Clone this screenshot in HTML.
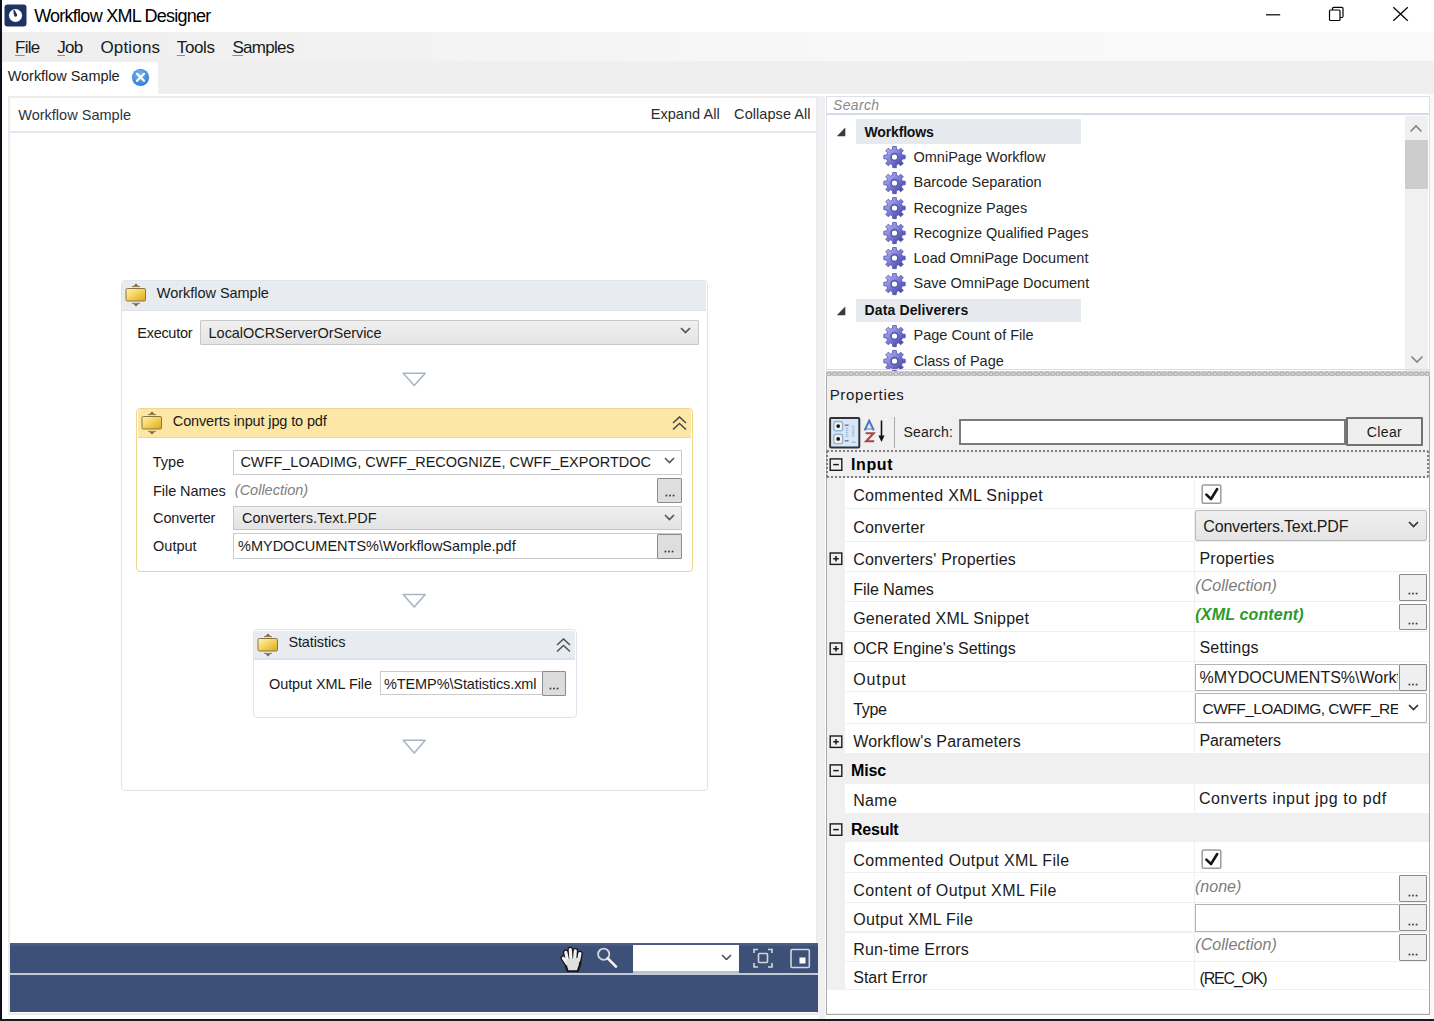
<!DOCTYPE html>
<html><head><meta charset="utf-8"><title>Workflow XML Designer</title>
<style>
html,body{margin:0;padding:0;width:1434px;height:1021px;overflow:hidden;background:#fff}
body{position:relative;font-family:"Liberation Sans", sans-serif}
body div, body svg{position:absolute}
.t{white-space:pre;font-family:"Liberation Sans", sans-serif}
u{text-decoration-color:#8c8c8c;text-underline-offset:1.5px}
</style></head><body>
<div style="left:0px;top:0px;width:1434px;height:32px;background:#fff"></div>
<div style="left:0px;top:0px;width:1.6px;height:1021px;background:#0b0f17;z-index:5"></div>
<div style="left:0px;top:1018.5px;width:1434px;height:2.5px;background:#1a1a1a;z-index:5"></div>
<svg style="position:absolute;left:4px;top:4px" width="23" height="23" viewBox="0 0 23 23"><rect x="0.5" y="0.5" width="22" height="22" rx="3" fill="#1d3461"/><ellipse cx="11.5" cy="11.5" rx="6.6" ry="6.4" fill="#fff"/><path d="M9.2 6.3 L10.6 6 L13.1 10.6 Q13.4 12.6 11.8 12.8 Q10.3 12.8 10 11.2 Z" fill="#1d3461"/></svg>
<div class="t" style="left:34.2px;top:7.06px;font-size:18px;line-height:18px;color:#000;font-weight:normal;font-style:normal;letter-spacing:-0.748px;">Workflow XML Designer</div>
<svg style="position:absolute;left:1250px;top:0" width="184" height="32" viewBox="0 0 184 32"><path d="M16 14.8 H30.2" stroke="#000" stroke-width="1.2"/><rect x="79.5" y="10" width="10.5" height="10.5" rx="1" fill="none" stroke="#000" stroke-width="1.2"/><path d="M82.5 10 V8.5 Q82.5 7.3 83.7 7.3 H91.8 Q93 7.3 93 8.5 V16.3 Q93 17.5 91.8 17.5 H90" fill="none" stroke="#000" stroke-width="1.2"/><path d="M143.3 7.2 L157.8 20.7 M157.8 7.2 L143.3 20.7" stroke="#000" stroke-width="1.2"/></svg>
<div style="left:2px;top:32px;width:1432px;height:29px;background:linear-gradient(90deg,#eeeeee,#f2f2f2 25%,#f8f8f8 60%,#fafafa)"></div>
<div class="t" style="left:15.1px;top:38.91px;font-size:17px;line-height:17px;color:#1a1a1a;font-weight:normal;font-style:normal;letter-spacing:-0.802px;text-decoration-color:#8a8a8a;text-underline-offset:2px"><u>F</u>ile</div>
<div class="t" style="left:57.3px;top:38.91px;font-size:17px;line-height:17px;color:#1a1a1a;font-weight:normal;font-style:normal;letter-spacing:-0.711px;text-decoration-color:#8a8a8a;text-underline-offset:2px"><u>J</u>ob</div>
<div class="t" style="left:100.5px;top:38.91px;font-size:17px;line-height:17px;color:#1a1a1a;font-weight:normal;font-style:normal;letter-spacing:0.151px;text-decoration-color:#8a8a8a;text-underline-offset:2px">Options</div>
<div class="t" style="left:176.8px;top:38.91px;font-size:17px;line-height:17px;color:#1a1a1a;font-weight:normal;font-style:normal;letter-spacing:-0.372px;text-decoration-color:#8a8a8a;text-underline-offset:2px"><u>T</u>ools</div>
<div class="t" style="left:232.4px;top:38.91px;font-size:17px;line-height:17px;color:#1a1a1a;font-weight:normal;font-style:normal;letter-spacing:-0.693px;text-decoration-color:#8a8a8a;text-underline-offset:2px"><u>S</u>amples</div>
<div style="left:2px;top:61px;width:1432px;height:32.5px;background:#efefef"></div>
<div style="left:2px;top:61.5px;width:155.5px;height:32px;background:#fff"></div>
<div class="t" style="left:7.7px;top:68.63px;font-size:14.5px;line-height:14.5px;color:#1e1e1e;font-weight:normal;font-style:normal;letter-spacing:-0.039px;">Workflow Sample</div>
<svg style="position:absolute;left:131px;top:68px" width="19" height="19" viewBox="0 0 19 19"><defs><radialGradient id="cg" cx="45%" cy="35%" r="65%"><stop offset="0" stop-color="#7fb6f0"/><stop offset="1" stop-color="#2f7fd6"/></radialGradient></defs><circle cx="9.5" cy="9.3" r="8.6" fill="url(#cg)"/><path d="M6 5.8 L13 12.8 M13 5.8 L6 12.8" stroke="#fff" stroke-width="2.2" stroke-linecap="round"/></svg>
<div style="left:2px;top:93.5px;width:1432px;height:925px;background:#fff"></div>
<div style="left:7.5px;top:96px;width:810.5px;height:919px;border:2px solid #ececec;box-sizing:border-box;background:#fff"></div>
<div style="left:9.5px;top:130.5px;width:808px;height:2px;background:#e3e8ef"></div>
<div class="t" style="left:18.2px;top:108.13px;font-size:14.5px;line-height:14.5px;color:#2b3440;font-weight:normal;font-style:normal;letter-spacing:0.018px;">Workflow Sample</div>
<div class="t" style="left:650.7px;top:106.53px;font-size:14.5px;line-height:14.5px;color:#2b2b2b;font-weight:normal;font-style:normal;letter-spacing:0.052px;">Expand All</div>
<div class="t" style="left:734.1px;top:106.53px;font-size:14.5px;line-height:14.5px;color:#2b2b2b;font-weight:normal;font-style:normal;letter-spacing:0.067px;">Collapse All</div>
<div style="left:817.5px;top:96px;width:7.5px;height:922.5px;background:#f0f0f0"></div>
<div style="left:1429.5px;top:93.5px;width:4.5px;height:925px;background:#f9f9f9"></div>
<div style="left:120.5px;top:279.5px;width:587px;height:511px;border:1.5px solid #dfe4ec;border-radius:4px;box-sizing:border-box;background:#fff"></div>
<div style="left:122px;top:281px;width:584px;height:29px;background:#e8ebef;border-radius:3px 3px 0 0"></div>
<div style="left:122px;top:309.5px;width:584px;height:1.5px;background:#dde3ea"></div>
<svg style="position:absolute;left:125px;top:283px" width="22" height="24" viewBox="0 0 22 24"><defs><linearGradient id="yg" x1="0" y1="0" x2="1" y2="1"><stop offset="0" stop-color="#fff4c0"/><stop offset=".45" stop-color="#f6d560"/><stop offset="1" stop-color="#d9a820"/></linearGradient></defs><path d="M11 0.5 L13.5 3 H8.5 Z" fill="#7a6a40"/><path d="M7 3.6 H15" stroke="#8a7a50" stroke-width="1"/><rect x="1" y="5.5" width="19.5" height="12.5" rx="1.3" fill="url(#yg)" stroke="#8a7440" stroke-width="1"/><path d="M7 20.4 H15" stroke="#8a7a50" stroke-width="1"/><path d="M11 23.5 L13.5 21 H8.5 Z" fill="#7a6a40"/></svg>
<div class="t" style="left:156.8px;top:285.63px;font-size:14.5px;line-height:14.5px;color:#1a1a1a;font-weight:normal;font-style:normal;letter-spacing:-0.032px;">Workflow Sample</div>
<div class="t" style="left:137.3px;top:325.93px;font-size:14.5px;line-height:14.5px;color:#1a1a1a;font-weight:normal;font-style:normal;letter-spacing:-0.291px;">Executor</div>
<div style="left:200px;top:319.5px;width:498.5px;height:25px;background:linear-gradient(#f0f0f0,#e5e5e5);border:1.5px solid #c8c8c8;box-sizing:border-box;border-radius:1px"></div>
<div class="t" style="left:208.6px;top:325.93px;font-size:14.5px;line-height:14.5px;color:#1a1a1a;font-weight:normal;font-style:normal;letter-spacing:-0.048px;">LocalOCRServerOrService</div>
<svg style="position:absolute;left:679.5px;top:327.45px" width="11" height="6.5" viewBox="0 0 11 6.5"><path d="M1 1 L5.5 5.5 L10 1" fill="none" stroke="#555" stroke-width="1.7"/></svg>
<svg style="position:absolute;left:0;top:0" width="1434" height="1021" viewBox="0 0 1434 1021"><path d="M403.2 373.2 H425.2 L414.2 385.5 Z" fill="none" stroke="#aab5c4" stroke-width="1.6" stroke-linejoin="round"/></svg>
<div style="left:136.2px;top:407.8px;width:556.5px;height:164.5px;border:1.5px solid #f0d58e;border-radius:4px;box-sizing:border-box;background:#fff"></div>
<div style="left:137.7px;top:409.3px;width:553.5px;height:28.4px;background:#fde7a6;border-radius:3px 3px 0 0"></div>
<div style="left:137.7px;top:436.7px;width:553.5px;height:1.8px;background:#f2d68f"></div>
<svg style="position:absolute;left:141px;top:411px" width="22" height="24" viewBox="0 0 22 24"><defs><linearGradient id="yg" x1="0" y1="0" x2="1" y2="1"><stop offset="0" stop-color="#fff4c0"/><stop offset=".45" stop-color="#f6d560"/><stop offset="1" stop-color="#d9a820"/></linearGradient></defs><path d="M11 0.5 L13.5 3 H8.5 Z" fill="#7a6a40"/><path d="M7 3.6 H15" stroke="#8a7a50" stroke-width="1"/><rect x="1" y="5.5" width="19.5" height="12.5" rx="1.3" fill="url(#yg)" stroke="#8a7440" stroke-width="1"/><path d="M7 20.4 H15" stroke="#8a7a50" stroke-width="1"/><path d="M11 23.5 L13.5 21 H8.5 Z" fill="#7a6a40"/></svg>
<div class="t" style="left:172.8px;top:413.63px;font-size:14.5px;line-height:14.5px;color:#1a1a1a;font-weight:normal;font-style:normal;letter-spacing:-0.133px;">Converts input jpg to pdf</div>
<svg style="position:absolute;left:671.5px;top:416.2px" width="15" height="15" viewBox="0 0 15 15"><path d="M1 7 L7.5 1 L14 7 M1 13.5 L7.5 7.5 L14 13.5" fill="none" stroke="#4a4a4a" stroke-width="1.6"/></svg>
<div class="t" style="left:152.8px;top:455.13px;font-size:14.5px;line-height:14.5px;color:#1a1a1a;font-weight:normal;font-style:normal;letter-spacing:0px;">Type</div>
<div style="left:233px;top:449.5px;width:449px;height:25.2px;background:#fff;border:1.5px solid #c9cbcf;box-sizing:border-box"></div>
<div class="t" style="left:240.4px;top:454.83px;font-size:14.5px;line-height:14.5px;color:#1a1a1a;font-weight:normal;font-style:normal;letter-spacing:0px;">CWFF_LOADIMG, CWFF_RECOGNIZE, CWFF_EXPORTDOC</div>
<svg style="position:absolute;left:663.5px;top:457.45px" width="11" height="6.5" viewBox="0 0 11 6.5"><path d="M1 1 L5.5 5.5 L10 1" fill="none" stroke="#555" stroke-width="1.6"/></svg>
<div class="t" style="left:153.1px;top:483.83px;font-size:14.5px;line-height:14.5px;color:#1a1a1a;font-weight:normal;font-style:normal;letter-spacing:-0.081px;">File Names</div>
<div class="t" style="left:234.8px;top:483.23px;font-size:14.5px;line-height:14.5px;color:#808080;font-weight:normal;font-style:italic;letter-spacing:0px;">(Collection)</div>
<div style="left:657px;top:477.5px;width:25px;height:25px;background:#dedede;border:1.5px solid #8c8c8c;box-sizing:border-box;border-radius:1px"></div>
<svg style="position:absolute;left:663.5px;top:494.0px" width="12" height="3" viewBox="0 0 12 3"><rect x="1.6" y="0.7" width="1.7" height="1.7" fill="#3a3a3a"/><rect x="5.15" y="0.7" width="1.7" height="1.7" fill="#3a3a3a"/><rect x="8.7" y="0.7" width="1.7" height="1.7" fill="#3a3a3a"/></svg>
<div class="t" style="left:153.1px;top:511.13px;font-size:14.5px;line-height:14.5px;color:#1a1a1a;font-weight:normal;font-style:normal;letter-spacing:-0.171px;">Converter</div>
<div style="left:233px;top:505.6px;width:449px;height:24.6px;background:linear-gradient(#f0f0f0,#e3e3e3);border:1.5px solid #c8c8c8;box-sizing:border-box"></div>
<div class="t" style="left:242px;top:511.33px;font-size:14.5px;line-height:14.5px;color:#1a1a1a;font-weight:normal;font-style:normal;letter-spacing:0px;">Converters.Text.PDF</div>
<svg style="position:absolute;left:663.5px;top:514.25px" width="11" height="6.5" viewBox="0 0 11 6.5"><path d="M1 1 L5.5 5.5 L10 1" fill="none" stroke="#555" stroke-width="1.6"/></svg>
<div class="t" style="left:153.1px;top:539.33px;font-size:14.5px;line-height:14.5px;color:#1a1a1a;font-weight:normal;font-style:normal;letter-spacing:0px;">Output</div>
<div style="left:233px;top:533.2px;width:449px;height:25.6px;background:#fff;border:1.5px solid #c9cbcf;box-sizing:border-box"></div>
<div class="t" style="left:238px;top:539.43px;font-size:14.5px;line-height:14.5px;color:#1a1a1a;font-weight:normal;font-style:normal;letter-spacing:0px;">%MYDOCUMENTS%\WorkflowSample.pdf</div>
<div style="left:656.5px;top:533.5px;width:25.5px;height:25px;background:#dedede;border:1.5px solid #8c8c8c;box-sizing:border-box;border-radius:1px"></div>
<svg style="position:absolute;left:663.25px;top:550.0px" width="12" height="3" viewBox="0 0 12 3"><rect x="1.6" y="0.7" width="1.7" height="1.7" fill="#3a3a3a"/><rect x="5.15" y="0.7" width="1.7" height="1.7" fill="#3a3a3a"/><rect x="8.7" y="0.7" width="1.7" height="1.7" fill="#3a3a3a"/></svg>
<svg style="position:absolute;left:0;top:0" width="1434" height="1021" viewBox="0 0 1434 1021"><path d="M403.2 594.5 H425.2 L414.2 607 Z" fill="none" stroke="#aab5c4" stroke-width="1.6" stroke-linejoin="round"/></svg>
<div style="left:252.5px;top:629.2px;width:324px;height:88.8px;border:1.5px solid #dfe4ec;border-radius:4px;box-sizing:border-box;background:#fff"></div>
<div style="left:254px;top:630.7px;width:321px;height:28.3px;background:#e8ebef;border-radius:3px 3px 0 0"></div>
<div style="left:254px;top:658.2px;width:321px;height:1.6px;background:#dde3ea"></div>
<svg style="position:absolute;left:256.5px;top:633px" width="22" height="24" viewBox="0 0 22 24"><defs><linearGradient id="yg" x1="0" y1="0" x2="1" y2="1"><stop offset="0" stop-color="#fff4c0"/><stop offset=".45" stop-color="#f6d560"/><stop offset="1" stop-color="#d9a820"/></linearGradient></defs><path d="M11 0.5 L13.5 3 H8.5 Z" fill="#7a6a40"/><path d="M7 3.6 H15" stroke="#8a7a50" stroke-width="1"/><rect x="1" y="5.5" width="19.5" height="12.5" rx="1.3" fill="url(#yg)" stroke="#8a7440" stroke-width="1"/><path d="M7 20.4 H15" stroke="#8a7a50" stroke-width="1"/><path d="M11 23.5 L13.5 21 H8.5 Z" fill="#7a6a40"/></svg>
<div class="t" style="left:288.4px;top:635.43px;font-size:14.5px;line-height:14.5px;color:#1a1a1a;font-weight:normal;font-style:normal;letter-spacing:-0.113px;">Statistics</div>
<svg style="position:absolute;left:555.5px;top:638px" width="15" height="15" viewBox="0 0 15 15"><path d="M1 7 L7.5 1 L14 7 M1 13.5 L7.5 7.5 L14 13.5" fill="none" stroke="#4b5563" stroke-width="1.6"/></svg>
<div class="t" style="left:269px;top:676.73px;font-size:14.5px;line-height:14.5px;color:#1a1a1a;font-weight:normal;font-style:normal;letter-spacing:-0.088px;">Output XML File</div>
<div style="left:379.5px;top:671.3px;width:163px;height:24.2px;background:#fff;border:1.5px solid #c9cbcf;box-sizing:border-box"></div>
<div class="t" style="left:384px;top:676.73px;font-size:14.5px;line-height:14.5px;color:#1a1a1a;font-weight:normal;font-style:normal;letter-spacing:-0.109px;">%TEMP%\Statistics.xml</div>
<div style="left:541.7px;top:671.3px;width:24.8px;height:24.3px;background:#dcdcdc;border:1.5px solid #8c8c8c;box-sizing:border-box;border-radius:1px"></div>
<svg style="position:absolute;left:548.1px;top:687.0999999999999px" width="12" height="3" viewBox="0 0 12 3"><rect x="1.6" y="0.7" width="1.7" height="1.7" fill="#3a3a3a"/><rect x="5.15" y="0.7" width="1.7" height="1.7" fill="#3a3a3a"/><rect x="8.7" y="0.7" width="1.7" height="1.7" fill="#3a3a3a"/></svg>
<svg style="position:absolute;left:0;top:0" width="1434" height="1021" viewBox="0 0 1434 1021"><path d="M403.2 740.3 H425.2 L414.2 753 Z" fill="none" stroke="#aab5c4" stroke-width="1.6" stroke-linejoin="round"/></svg>
<div style="left:9.8px;top:942.7px;width:808px;height:69px;background:#3d5078"></div>
<div style="left:9.8px;top:942.7px;width:808px;height:4px;background:linear-gradient(#4f6289,#3d5078)"></div>
<div style="left:9.8px;top:973.2px;width:808px;height:1.9px;background:#c3cad6"></div>
<div style="left:633px;top:944.8px;width:105.5px;height:27.7px;background:#fff"></div>
<div style="left:633px;top:971px;width:105.5px;height:2px;background:#b9c3d2"></div>
<svg style="position:absolute;left:720.8px;top:953.95px" width="11" height="6.5" viewBox="0 0 11 6.5"><path d="M1 1 L5.5 5.5 L10 1" fill="none" stroke="#555" stroke-width="1.7"/></svg>
<svg style="position:absolute;left:555px;top:943px" width="35" height="30" viewBox="0 0 35 30"><g stroke="#151515" stroke-linecap="round" fill="none"><path d="M8.3 15.2 L12 20.5 M10.8 9.3 L12.6 17.5 M15.3 6.6 L15.9 15.5 M20.3 7.8 L19.7 15.5 M24.9 10.6 L23.6 17.5" stroke-width="5.6"/></g><path d="M10.5 16 L25.8 13.5 L24.8 22 L22.8 27.8 L12.6 27.8 L10.8 22.5 Z" fill="#151515" stroke="#151515" stroke-width="2.4" stroke-linejoin="round"/><g stroke="#f2f2f2" stroke-linecap="round" fill="none"><path d="M8.3 15.2 L12 20.5 M10.8 9.3 L12.6 17.5 M15.3 6.6 L15.9 15.5 M20.3 7.8 L19.7 15.5 M24.9 10.6 L23.6 17.5" stroke-width="3.2"/></g><path d="M11.5 16.5 L24.6 14.5 L23.8 22 L21.9 27.2 L13.4 27.2 L11.8 22.3 Z" fill="#dedede"/></svg>
<svg style="position:absolute;left:595px;top:945px" width="25" height="25" viewBox="0 0 25 25"><circle cx="8.7" cy="9.2" r="5.6" fill="none" stroke="#d8d8d8" stroke-width="1.8"/><path d="M12.8 13.3 L21 21.6" stroke="#f4f4f4" stroke-width="2.6" stroke-linecap="round"/></svg>
<svg style="position:absolute;left:752px;top:947px" width="23" height="23" viewBox="0 0 23 23"><path d="M2 6 V2.5 H6 M16 2.5 H20 V6 M20 16 V20 H16 M6 20 H2 V16" fill="none" stroke="#d6d6d6" stroke-width="1.6"/><rect x="6.5" y="6.5" width="9" height="9" rx="1" fill="none" stroke="#d6d6d6" stroke-width="1.6"/></svg>
<svg style="position:absolute;left:789px;top:947px" width="23" height="23" viewBox="0 0 23 23"><rect x="2" y="2.5" width="18.3" height="18" rx="1" fill="none" stroke="#d6d6d6" stroke-width="1.6"/><rect x="10.5" y="10.5" width="6" height="6" fill="#fff"/></svg>
<div style="left:825.5px;top:95.5px;width:604px;height:275px;overflow:hidden;background:#fff;border:1.5px solid #d8e0ea;border-bottom:none;box-sizing:border-box">
</div>
<div style="left:827px;top:113px;width:601.5px;height:2px;background:#d3dbe6"></div>
<div class="t" style="left:833px;top:98.35px;font-size:14px;line-height:14px;color:#8a8a8a;font-weight:normal;font-style:italic;letter-spacing:0.328px;">Search</div>
<div style="left:1404.8px;top:115.5px;width:23.5px;height:255px;background:#f0f0f0"></div>
<div style="left:1404.8px;top:140.2px;width:23.5px;height:48.4px;background:#cdcdcd"></div>
<svg style="position:absolute;left:1409px;top:124px" width="14" height="9" viewBox="0 0 14 9"><path d="M1.5 7.5 L7 2 L12.5 7.5" fill="none" stroke="#858585" stroke-width="1.7"/></svg>
<svg style="position:absolute;left:1409.5px;top:354.5px" width="14" height="9" viewBox="0 0 14 9"><path d="M1.5 1.5 L7 7 L12.5 1.5" fill="none" stroke="#858585" stroke-width="1.7"/></svg>
<div style="left:855.8px;top:119.1px;width:225.3px;height:24.5px;background:#e6eaee"></div>
<svg style="position:absolute;left:836.2px;top:126.8px" width="10" height="10" viewBox="0 0 10 10"><path d="M9.3 0.6 V9.2 H0.8 Z" fill="#3a3a3a"/></svg>
<div class="t" style="left:864.5px;top:124.85px;font-size:14px;line-height:14px;color:#111;font-weight:bold;font-style:normal;letter-spacing:-0.154px;">Workflows</div>
<svg style="position:absolute;left:883.3px;top:146.39999999999998px" width="23" height="23" viewBox="0 0 23 23"><defs><linearGradient id="gg" x1="0.1" y1="0.1" x2="0.9" y2="0.9"><stop offset="0" stop-color="#b4b4f6"/><stop offset=".5" stop-color="#7a7ad6"/><stop offset="1" stop-color="#40409e"/></linearGradient></defs><path d="M8.44 3.61 L9.57 3.24 L9.73 0.35 L13.27 0.35 L13.43 3.24 L14.56 3.61 L15.63 4.15 L17.78 2.21 L20.29 4.72 L18.35 6.87 L18.89 7.94 L19.26 9.07 L22.15 9.23 L22.15 12.77 L19.26 12.93 L18.89 14.06 L18.35 15.13 L20.29 17.28 L17.78 19.79 L15.63 17.85 L14.56 18.39 L13.43 18.76 L13.27 21.65 L9.73 21.65 L9.57 18.76 L8.44 18.39 L7.37 17.85 L5.22 19.79 L2.71 17.28 L4.65 15.13 L4.11 14.06 L3.74 12.93 L0.85 12.77 L0.85 9.23 L3.74 9.07 L4.11 7.94 L4.65 6.87 L2.71 4.72 L5.22 2.21 L7.37 4.15 Z" fill="url(#gg)" stroke="#5a5ab0" stroke-width="0.9" stroke-linejoin="round"/><circle cx="11.5" cy="11" r="3.4" fill="#fff" stroke="#5c5cae" stroke-width="1.6"/></svg>
<div class="t" style="left:913.5px;top:150.13px;font-size:14.5px;line-height:14.5px;color:#262626;font-weight:normal;font-style:normal;letter-spacing:0px;">OmniPage Workflow</div>
<svg style="position:absolute;left:883.3px;top:171.64px" width="23" height="23" viewBox="0 0 23 23"><defs><linearGradient id="gg" x1="0.1" y1="0.1" x2="0.9" y2="0.9"><stop offset="0" stop-color="#b4b4f6"/><stop offset=".5" stop-color="#7a7ad6"/><stop offset="1" stop-color="#40409e"/></linearGradient></defs><path d="M8.44 3.61 L9.57 3.24 L9.73 0.35 L13.27 0.35 L13.43 3.24 L14.56 3.61 L15.63 4.15 L17.78 2.21 L20.29 4.72 L18.35 6.87 L18.89 7.94 L19.26 9.07 L22.15 9.23 L22.15 12.77 L19.26 12.93 L18.89 14.06 L18.35 15.13 L20.29 17.28 L17.78 19.79 L15.63 17.85 L14.56 18.39 L13.43 18.76 L13.27 21.65 L9.73 21.65 L9.57 18.76 L8.44 18.39 L7.37 17.85 L5.22 19.79 L2.71 17.28 L4.65 15.13 L4.11 14.06 L3.74 12.93 L0.85 12.77 L0.85 9.23 L3.74 9.07 L4.11 7.94 L4.65 6.87 L2.71 4.72 L5.22 2.21 L7.37 4.15 Z" fill="url(#gg)" stroke="#5a5ab0" stroke-width="0.9" stroke-linejoin="round"/><circle cx="11.5" cy="11" r="3.4" fill="#fff" stroke="#5c5cae" stroke-width="1.6"/></svg>
<div class="t" style="left:913.5px;top:175.37px;font-size:14.5px;line-height:14.5px;color:#262626;font-weight:normal;font-style:normal;letter-spacing:0px;">Barcode Separation</div>
<svg style="position:absolute;left:883.3px;top:196.87999999999997px" width="23" height="23" viewBox="0 0 23 23"><defs><linearGradient id="gg" x1="0.1" y1="0.1" x2="0.9" y2="0.9"><stop offset="0" stop-color="#b4b4f6"/><stop offset=".5" stop-color="#7a7ad6"/><stop offset="1" stop-color="#40409e"/></linearGradient></defs><path d="M8.44 3.61 L9.57 3.24 L9.73 0.35 L13.27 0.35 L13.43 3.24 L14.56 3.61 L15.63 4.15 L17.78 2.21 L20.29 4.72 L18.35 6.87 L18.89 7.94 L19.26 9.07 L22.15 9.23 L22.15 12.77 L19.26 12.93 L18.89 14.06 L18.35 15.13 L20.29 17.28 L17.78 19.79 L15.63 17.85 L14.56 18.39 L13.43 18.76 L13.27 21.65 L9.73 21.65 L9.57 18.76 L8.44 18.39 L7.37 17.85 L5.22 19.79 L2.71 17.28 L4.65 15.13 L4.11 14.06 L3.74 12.93 L0.85 12.77 L0.85 9.23 L3.74 9.07 L4.11 7.94 L4.65 6.87 L2.71 4.72 L5.22 2.21 L7.37 4.15 Z" fill="url(#gg)" stroke="#5a5ab0" stroke-width="0.9" stroke-linejoin="round"/><circle cx="11.5" cy="11" r="3.4" fill="#fff" stroke="#5c5cae" stroke-width="1.6"/></svg>
<div class="t" style="left:913.5px;top:200.61px;font-size:14.5px;line-height:14.5px;color:#262626;font-weight:normal;font-style:normal;letter-spacing:0px;">Recognize Pages</div>
<svg style="position:absolute;left:883.3px;top:222.11999999999998px" width="23" height="23" viewBox="0 0 23 23"><defs><linearGradient id="gg" x1="0.1" y1="0.1" x2="0.9" y2="0.9"><stop offset="0" stop-color="#b4b4f6"/><stop offset=".5" stop-color="#7a7ad6"/><stop offset="1" stop-color="#40409e"/></linearGradient></defs><path d="M8.44 3.61 L9.57 3.24 L9.73 0.35 L13.27 0.35 L13.43 3.24 L14.56 3.61 L15.63 4.15 L17.78 2.21 L20.29 4.72 L18.35 6.87 L18.89 7.94 L19.26 9.07 L22.15 9.23 L22.15 12.77 L19.26 12.93 L18.89 14.06 L18.35 15.13 L20.29 17.28 L17.78 19.79 L15.63 17.85 L14.56 18.39 L13.43 18.76 L13.27 21.65 L9.73 21.65 L9.57 18.76 L8.44 18.39 L7.37 17.85 L5.22 19.79 L2.71 17.28 L4.65 15.13 L4.11 14.06 L3.74 12.93 L0.85 12.77 L0.85 9.23 L3.74 9.07 L4.11 7.94 L4.65 6.87 L2.71 4.72 L5.22 2.21 L7.37 4.15 Z" fill="url(#gg)" stroke="#5a5ab0" stroke-width="0.9" stroke-linejoin="round"/><circle cx="11.5" cy="11" r="3.4" fill="#fff" stroke="#5c5cae" stroke-width="1.6"/></svg>
<div class="t" style="left:913.5px;top:225.85px;font-size:14.5px;line-height:14.5px;color:#262626;font-weight:normal;font-style:normal;letter-spacing:0px;">Recognize Qualified Pages</div>
<svg style="position:absolute;left:883.3px;top:247.35999999999996px" width="23" height="23" viewBox="0 0 23 23"><defs><linearGradient id="gg" x1="0.1" y1="0.1" x2="0.9" y2="0.9"><stop offset="0" stop-color="#b4b4f6"/><stop offset=".5" stop-color="#7a7ad6"/><stop offset="1" stop-color="#40409e"/></linearGradient></defs><path d="M8.44 3.61 L9.57 3.24 L9.73 0.35 L13.27 0.35 L13.43 3.24 L14.56 3.61 L15.63 4.15 L17.78 2.21 L20.29 4.72 L18.35 6.87 L18.89 7.94 L19.26 9.07 L22.15 9.23 L22.15 12.77 L19.26 12.93 L18.89 14.06 L18.35 15.13 L20.29 17.28 L17.78 19.79 L15.63 17.85 L14.56 18.39 L13.43 18.76 L13.27 21.65 L9.73 21.65 L9.57 18.76 L8.44 18.39 L7.37 17.85 L5.22 19.79 L2.71 17.28 L4.65 15.13 L4.11 14.06 L3.74 12.93 L0.85 12.77 L0.85 9.23 L3.74 9.07 L4.11 7.94 L4.65 6.87 L2.71 4.72 L5.22 2.21 L7.37 4.15 Z" fill="url(#gg)" stroke="#5a5ab0" stroke-width="0.9" stroke-linejoin="round"/><circle cx="11.5" cy="11" r="3.4" fill="#fff" stroke="#5c5cae" stroke-width="1.6"/></svg>
<div class="t" style="left:913.5px;top:251.09px;font-size:14.5px;line-height:14.5px;color:#262626;font-weight:normal;font-style:normal;letter-spacing:0px;">Load OmniPage Document</div>
<svg style="position:absolute;left:883.3px;top:272.59999999999997px" width="23" height="23" viewBox="0 0 23 23"><defs><linearGradient id="gg" x1="0.1" y1="0.1" x2="0.9" y2="0.9"><stop offset="0" stop-color="#b4b4f6"/><stop offset=".5" stop-color="#7a7ad6"/><stop offset="1" stop-color="#40409e"/></linearGradient></defs><path d="M8.44 3.61 L9.57 3.24 L9.73 0.35 L13.27 0.35 L13.43 3.24 L14.56 3.61 L15.63 4.15 L17.78 2.21 L20.29 4.72 L18.35 6.87 L18.89 7.94 L19.26 9.07 L22.15 9.23 L22.15 12.77 L19.26 12.93 L18.89 14.06 L18.35 15.13 L20.29 17.28 L17.78 19.79 L15.63 17.85 L14.56 18.39 L13.43 18.76 L13.27 21.65 L9.73 21.65 L9.57 18.76 L8.44 18.39 L7.37 17.85 L5.22 19.79 L2.71 17.28 L4.65 15.13 L4.11 14.06 L3.74 12.93 L0.85 12.77 L0.85 9.23 L3.74 9.07 L4.11 7.94 L4.65 6.87 L2.71 4.72 L5.22 2.21 L7.37 4.15 Z" fill="url(#gg)" stroke="#5a5ab0" stroke-width="0.9" stroke-linejoin="round"/><circle cx="11.5" cy="11" r="3.4" fill="#fff" stroke="#5c5cae" stroke-width="1.6"/></svg>
<div class="t" style="left:913.5px;top:276.33px;font-size:14.5px;line-height:14.5px;color:#262626;font-weight:normal;font-style:normal;letter-spacing:0px;">Save OmniPage Document</div>
<div style="left:855.8px;top:298.6px;width:225.3px;height:23.7px;background:#e6eaee"></div>
<svg style="position:absolute;left:836.2px;top:305.5px" width="10" height="10" viewBox="0 0 10 10"><path d="M9.3 0.6 V9.2 H0.8 Z" fill="#3a3a3a"/></svg>
<div class="t" style="left:864.6px;top:303.35px;font-size:14px;line-height:14px;color:#111;font-weight:bold;font-style:normal;letter-spacing:0.118px;">Data Deliverers</div>
<svg style="position:absolute;left:883.3px;top:324.59999999999997px" width="23" height="23" viewBox="0 0 23 23"><defs><linearGradient id="gg" x1="0.1" y1="0.1" x2="0.9" y2="0.9"><stop offset="0" stop-color="#b4b4f6"/><stop offset=".5" stop-color="#7a7ad6"/><stop offset="1" stop-color="#40409e"/></linearGradient></defs><path d="M8.44 3.61 L9.57 3.24 L9.73 0.35 L13.27 0.35 L13.43 3.24 L14.56 3.61 L15.63 4.15 L17.78 2.21 L20.29 4.72 L18.35 6.87 L18.89 7.94 L19.26 9.07 L22.15 9.23 L22.15 12.77 L19.26 12.93 L18.89 14.06 L18.35 15.13 L20.29 17.28 L17.78 19.79 L15.63 17.85 L14.56 18.39 L13.43 18.76 L13.27 21.65 L9.73 21.65 L9.57 18.76 L8.44 18.39 L7.37 17.85 L5.22 19.79 L2.71 17.28 L4.65 15.13 L4.11 14.06 L3.74 12.93 L0.85 12.77 L0.85 9.23 L3.74 9.07 L4.11 7.94 L4.65 6.87 L2.71 4.72 L5.22 2.21 L7.37 4.15 Z" fill="url(#gg)" stroke="#5a5ab0" stroke-width="0.9" stroke-linejoin="round"/><circle cx="11.5" cy="11" r="3.4" fill="#fff" stroke="#5c5cae" stroke-width="1.6"/></svg>
<div class="t" style="left:913.5px;top:328.33px;font-size:14.5px;line-height:14.5px;color:#262626;font-weight:normal;font-style:normal;letter-spacing:0px;">Page Count of File</div>
<svg style="position:absolute;left:883.3px;top:349.9px" width="23" height="23" viewBox="0 0 23 23"><defs><linearGradient id="gg" x1="0.1" y1="0.1" x2="0.9" y2="0.9"><stop offset="0" stop-color="#b4b4f6"/><stop offset=".5" stop-color="#7a7ad6"/><stop offset="1" stop-color="#40409e"/></linearGradient></defs><path d="M8.44 3.61 L9.57 3.24 L9.73 0.35 L13.27 0.35 L13.43 3.24 L14.56 3.61 L15.63 4.15 L17.78 2.21 L20.29 4.72 L18.35 6.87 L18.89 7.94 L19.26 9.07 L22.15 9.23 L22.15 12.77 L19.26 12.93 L18.89 14.06 L18.35 15.13 L20.29 17.28 L17.78 19.79 L15.63 17.85 L14.56 18.39 L13.43 18.76 L13.27 21.65 L9.73 21.65 L9.57 18.76 L8.44 18.39 L7.37 17.85 L5.22 19.79 L2.71 17.28 L4.65 15.13 L4.11 14.06 L3.74 12.93 L0.85 12.77 L0.85 9.23 L3.74 9.07 L4.11 7.94 L4.65 6.87 L2.71 4.72 L5.22 2.21 L7.37 4.15 Z" fill="url(#gg)" stroke="#5a5ab0" stroke-width="0.9" stroke-linejoin="round"/><circle cx="11.5" cy="11" r="3.4" fill="#fff" stroke="#5c5cae" stroke-width="1.6"/></svg>
<div class="t" style="left:913.5px;top:353.63px;font-size:14.5px;line-height:14.5px;color:#262626;font-weight:normal;font-style:normal;letter-spacing:0px;">Class of Page</div>
<div style="left:825.5px;top:369.3px;width:604px;height:1.2px;background:#d5dce6"></div>
<div style="left:825.5px;top:370.5px;width:604px;height:5.8px;background:radial-gradient(circle at 50% 50%, #dedede 0 1.1px, #b2b2b2 1.5px 2.3px, #d3d3d3 2.7px) 0 0/5.6px 5.8px"></div>
<div style="left:825.5px;top:376.2px;width:604px;height:638.5px;background:#f0f0f0;border:1.5px solid #a9a9a9;border-top:none;box-sizing:border-box"></div>
<div class="t" style="left:829.7px;top:387.40px;font-size:15px;line-height:15px;color:#1a1a1a;font-weight:normal;font-style:normal;letter-spacing:0.647px;">Properties</div>
<svg style="position:absolute;left:829px;top:416.5px" width="32" height="32" viewBox="0 0 32 32"><rect x="1.1" y="1.1" width="29.2" height="29.3" rx="1" fill="#d7e7f7" stroke="#2f3236" stroke-width="2"/><rect x="4.7" y="4.5" width="9" height="9.3" rx="2.2" fill="#f4f1ea" stroke="#93b4d2" stroke-width="1.4"/><circle cx="9.2" cy="9.1" r="1.9" fill="#111"/><rect x="4.7" y="17.3" width="9" height="9.3" rx="2.2" fill="#f4f1ea" stroke="#93b4d2" stroke-width="1.4"/><circle cx="9.2" cy="21.9" r="1.9" fill="#111"/><path d="M15.8 8.3 H19.6 M15.8 23.8 H19.6" stroke="#6f7f90" stroke-width="1.5"/><path d="M18 10.5 V20.5 M24.2 8.8 V20" stroke="#aec1d6" stroke-width="2.6" stroke-dasharray="1.4 0.7"/><path d="M22.8 25.2 H26.5" stroke="#9fb2c6" stroke-width="1.3"/></svg>
<svg style="position:absolute;left:863px;top:419px" width="24" height="25" viewBox="0 0 24 25"><path d="M1.6 11.4 L6.2 1.8 L10.8 11.4" fill="none" stroke="#4a78c8" stroke-width="2.1"/><path d="M2.8 10 H9.6" stroke="#4a78c8" stroke-width="1"/><path d="M2.6 14.2 H10.6 L3.2 22.3 H11.2" fill="none" stroke="#ab4545" stroke-width="2.1"/><path d="M18.5 1.5 V18.5" stroke="#151515" stroke-width="1.6"/><path d="M15.4 16.6 L18.5 23 L21.6 16.6 Z" fill="#151515"/></svg>
<div style="left:893.9px;top:417px;width:1.2px;height:30.5px;background:#a8a8a8"></div>
<div class="t" style="left:903.4px;top:425.05px;font-size:14px;line-height:14px;color:#1a1a1a;font-weight:normal;font-style:normal;letter-spacing:0.225px;">Search:</div>
<div style="left:959.3px;top:419.1px;width:386.5px;height:26px;background:#fff;border:2px solid #7a7a7a;box-sizing:border-box"></div>
<div style="left:1345.8px;top:417.4px;width:77.2px;height:28.8px;background:#efefef;border:2px solid #717171;box-sizing:border-box;border-radius:1px"></div>
<div class="t" style="left:1366.8px;top:425.25px;font-size:14px;line-height:14px;color:#1a1a1a;font-weight:normal;font-style:normal;letter-spacing:0.383px;">Clear</div>
<div style="left:827px;top:478px;width:601.5px;height:535px;background:#fff"></div>
<div style="left:827px;top:478px;width:17.5px;height:512px;background:#f0f0f0"></div>
<div style="left:827px;top:451px;width:601.5px;height:27px;background:#f0f0f0"></div>
<svg style="position:absolute;left:828.5px;top:458.4px" width="15" height="14" viewBox="0 0 15 14"><rect x="1.2" y="0.9" width="11.6" height="11.4" fill="none" stroke="#1a1a1a" stroke-width="1.4"/><path d="M4.2 6.6 H9.8" stroke="#1a1a1a" stroke-width="1.5"/></svg>
<div class="t" style="left:851px;top:457.16px;font-size:16px;line-height:16px;color:#000;font-weight:bold;font-style:normal;letter-spacing:0.627px;">Input</div>
<div style="left:826.5px;top:450px;width:601.5px;height:2px;background:repeating-linear-gradient(90deg,#7c7c7c 0 2px,transparent 2px 4px)"></div>
<div style="left:826.5px;top:476.2px;width:601.5px;height:2px;background:repeating-linear-gradient(90deg,#7c7c7c 0 2px,transparent 2px 4px)"></div>
<div style="left:826.3px;top:451px;width:1.8px;height:27px;background:repeating-linear-gradient(180deg,#7c7c7c 0 2px,transparent 2px 4px)"></div>
<div style="left:1427px;top:451px;width:1.8px;height:27px;background:repeating-linear-gradient(180deg,#7c7c7c 0 2px,transparent 2px 4px)"></div>
<div style="left:844.5px;top:508.3px;width:584px;height:1.2px;background:#f0f0f0"></div>
<div style="left:1193.5px;top:478px;width:1.2px;height:31.5px;background:#f0f0f0"></div>
<div class="t" style="left:853.2px;top:488.36px;font-size:16px;line-height:16px;color:#1a1a1a;font-weight:normal;font-style:normal;letter-spacing:0.345px;">Commented XML Snippet</div>
<div style="left:844.5px;top:541.0px;width:584px;height:1.2px;background:#f0f0f0"></div>
<div style="left:1193.5px;top:509.5px;width:1.2px;height:32.700000000000045px;background:#f0f0f0"></div>
<div class="t" style="left:853.2px;top:519.86px;font-size:16px;line-height:16px;color:#1a1a1a;font-weight:normal;font-style:normal;letter-spacing:0.181px;">Converter</div>
<div style="left:844.5px;top:571.0999999999999px;width:584px;height:1.2px;background:#f0f0f0"></div>
<div style="left:1193.5px;top:542.2px;width:1.2px;height:30.09999999999991px;background:#f0f0f0"></div>
<div class="t" style="left:853.2px;top:551.56px;font-size:16px;line-height:16px;color:#1a1a1a;font-weight:normal;font-style:normal;letter-spacing:0.187px;">Converters' Properties</div>
<svg style="position:absolute;left:828.5px;top:552.3000000000001px" width="15" height="14" viewBox="0 0 15 14"><rect x="1.2" y="1" width="11.6" height="11.4" fill="none" stroke="#1a1a1a" stroke-width="1.4"/><path d="M4.2 6.7 H9.8 M7 3.9 V9.5" stroke="#1a1a1a" stroke-width="1.5"/></svg>
<div style="left:844.5px;top:601.1999999999999px;width:584px;height:1.2px;background:#f0f0f0"></div>
<div style="left:1193.5px;top:572.3px;width:1.2px;height:30.100000000000023px;background:#f0f0f0"></div>
<div class="t" style="left:853.2px;top:581.56px;font-size:16px;line-height:16px;color:#1a1a1a;font-weight:normal;font-style:normal;letter-spacing:-0.034px;">File Names</div>
<div style="left:844.5px;top:630.5999999999999px;width:584px;height:1.2px;background:#f0f0f0"></div>
<div style="left:1193.5px;top:602.4px;width:1.2px;height:29.399999999999977px;background:#f0f0f0"></div>
<div class="t" style="left:853.2px;top:610.96px;font-size:16px;line-height:16px;color:#1a1a1a;font-weight:normal;font-style:normal;letter-spacing:0.231px;">Generated XML Snippet</div>
<div style="left:844.5px;top:661.1999999999999px;width:584px;height:1.2px;background:#f0f0f0"></div>
<div style="left:1193.5px;top:631.8px;width:1.2px;height:30.600000000000023px;background:#f0f0f0"></div>
<div class="t" style="left:853.2px;top:641.26px;font-size:16px;line-height:16px;color:#1a1a1a;font-weight:normal;font-style:normal;letter-spacing:-0.032px;">OCR Engine's Settings</div>
<svg style="position:absolute;left:828.5px;top:642.0px" width="15" height="14" viewBox="0 0 15 14"><rect x="1.2" y="1" width="11.6" height="11.4" fill="none" stroke="#1a1a1a" stroke-width="1.4"/><path d="M4.2 6.7 H9.8 M7 3.9 V9.5" stroke="#1a1a1a" stroke-width="1.5"/></svg>
<div style="left:844.5px;top:690.5999999999999px;width:584px;height:1.2px;background:#f0f0f0"></div>
<div style="left:1193.5px;top:662.4px;width:1.2px;height:29.399999999999977px;background:#f0f0f0"></div>
<div class="t" style="left:853.2px;top:671.56px;font-size:16px;line-height:16px;color:#1a1a1a;font-weight:normal;font-style:normal;letter-spacing:0.894px;">Output</div>
<div style="left:844.5px;top:722.8px;width:584px;height:1.2px;background:#f0f0f0"></div>
<div style="left:1193.5px;top:691.8px;width:1.2px;height:32.200000000000045px;background:#f0f0f0"></div>
<div class="t" style="left:853.2px;top:701.86px;font-size:16px;line-height:16px;color:#1a1a1a;font-weight:normal;font-style:normal;letter-spacing:-0.296px;">Type</div>
<div style="left:844.5px;top:752.8px;width:584px;height:1.2px;background:#f0f0f0"></div>
<div style="left:1193.5px;top:724px;width:1.2px;height:30px;background:#f0f0f0"></div>
<div class="t" style="left:853.2px;top:733.76px;font-size:16px;line-height:16px;color:#1a1a1a;font-weight:normal;font-style:normal;letter-spacing:0.196px;">Workflow's Parameters</div>
<svg style="position:absolute;left:828.5px;top:734.5px" width="15" height="14" viewBox="0 0 15 14"><rect x="1.2" y="1" width="11.6" height="11.4" fill="none" stroke="#1a1a1a" stroke-width="1.4"/><path d="M4.2 6.7 H9.8 M7 3.9 V9.5" stroke="#1a1a1a" stroke-width="1.5"/></svg>
<div style="left:827px;top:754px;width:601.5px;height:30px;background:#f0f0f0"></div>
<svg style="position:absolute;left:828.5px;top:763.8000000000001px" width="15" height="14" viewBox="0 0 15 14"><rect x="1.2" y="0.9" width="11.6" height="11.4" fill="none" stroke="#1a1a1a" stroke-width="1.4"/><path d="M4.2 6.6 H9.8" stroke="#1a1a1a" stroke-width="1.5"/></svg>
<div class="t" style="left:851px;top:762.56px;font-size:16px;line-height:16px;color:#000;font-weight:bold;font-style:normal;letter-spacing:-0.126px;">Misc</div>
<div style="left:844.5px;top:812.5999999999999px;width:584px;height:1.2px;background:#f0f0f0"></div>
<div style="left:1193.5px;top:784px;width:1.2px;height:29.799999999999955px;background:#f0f0f0"></div>
<div class="t" style="left:853.2px;top:792.86px;font-size:16px;line-height:16px;color:#1a1a1a;font-weight:normal;font-style:normal;letter-spacing:0.304px;">Name</div>
<div style="left:827px;top:813.8px;width:601.5px;height:28.5px;background:#f0f0f0"></div>
<svg style="position:absolute;left:828.5px;top:823.0px" width="15" height="14" viewBox="0 0 15 14"><rect x="1.2" y="0.9" width="11.6" height="11.4" fill="none" stroke="#1a1a1a" stroke-width="1.4"/><path d="M4.2 6.6 H9.8" stroke="#1a1a1a" stroke-width="1.5"/></svg>
<div class="t" style="left:851px;top:821.76px;font-size:16px;line-height:16px;color:#000;font-weight:bold;font-style:normal;letter-spacing:-0.241px;">Result</div>
<div style="left:844.5px;top:872.3px;width:584px;height:1.2px;background:#f0f0f0"></div>
<div style="left:1193.5px;top:842.3px;width:1.2px;height:31.200000000000045px;background:#f0f0f0"></div>
<div class="t" style="left:853.2px;top:852.76px;font-size:16px;line-height:16px;color:#1a1a1a;font-weight:normal;font-style:normal;letter-spacing:0.391px;">Commented Output XML File</div>
<div style="left:844.5px;top:901.8px;width:584px;height:1.2px;background:#f0f0f0"></div>
<div style="left:1193.5px;top:873.5px;width:1.2px;height:29.5px;background:#f0f0f0"></div>
<div class="t" style="left:853.2px;top:882.86px;font-size:16px;line-height:16px;color:#1a1a1a;font-weight:normal;font-style:normal;letter-spacing:0.397px;">Content of Output XML File</div>
<div style="left:844.5px;top:931.4px;width:584px;height:1.2px;background:#f0f0f0"></div>
<div style="left:1193.5px;top:903px;width:1.2px;height:29.600000000000023px;background:#f0f0f0"></div>
<div class="t" style="left:853.2px;top:912.26px;font-size:16px;line-height:16px;color:#1a1a1a;font-weight:normal;font-style:normal;letter-spacing:0.335px;">Output XML File</div>
<div style="left:844.5px;top:960.5px;width:584px;height:1.2px;background:#f0f0f0"></div>
<div style="left:1193.5px;top:932.6px;width:1.2px;height:29.100000000000023px;background:#f0f0f0"></div>
<div class="t" style="left:853.2px;top:941.56px;font-size:16px;line-height:16px;color:#1a1a1a;font-weight:normal;font-style:normal;letter-spacing:0.192px;">Run-time Errors</div>
<div style="left:844.5px;top:988.8px;width:584px;height:1.2px;background:#f0f0f0"></div>
<div style="left:1193.5px;top:961.7px;width:1.2px;height:28.299999999999955px;background:#f0f0f0"></div>
<div class="t" style="left:853.2px;top:970.26px;font-size:16px;line-height:16px;color:#1a1a1a;font-weight:normal;font-style:normal;letter-spacing:0.03px;">Start Error</div>
<svg style="position:absolute;left:1200.8px;top:484.3px" width="21" height="20" viewBox="0 0 21 20"><rect x="1.2" y="1.1" width="18.6" height="18.2" rx="1.3" fill="#fff" stroke="#9c9c9c" stroke-width="1.5"/><path d="M5.4 10.6 L10 15 L16.2 5" fill="none" stroke="#151515" stroke-width="2.6" stroke-linecap="round" stroke-linejoin="round"/></svg>
<div style="left:1195px;top:510.3px;width:231.7px;height:30.3px;background:linear-gradient(#f0f0f0,#e4e4e4);border:1.5px solid #b9b9b9;box-sizing:border-box;border-radius:2px"></div>
<div class="t" style="left:1203.3px;top:519.06px;font-size:16px;line-height:16px;color:#1a1a1a;font-weight:normal;font-style:normal;letter-spacing:-0.182px;">Converters.Text.PDF</div>
<svg style="position:absolute;left:1408.2px;top:521.45px" width="11" height="6.5" viewBox="0 0 11 6.5"><path d="M1 1 L5.5 5.5 L10 1" fill="none" stroke="#333" stroke-width="1.7"/></svg>
<div class="t" style="left:1199.5px;top:550.86px;font-size:16px;line-height:16px;color:#1a1a1a;font-weight:normal;font-style:normal;letter-spacing:0.198px;">Properties</div>
<div class="t" style="left:1195.3px;top:577.76px;font-size:16px;line-height:16px;color:#7c7c7c;font-weight:normal;font-style:italic;letter-spacing:0.053px;">(Collection)</div>
<div style="left:1399.3px;top:574px;width:27.4px;height:26.8px;background:#efefef;border:1.5px solid #8a8a8a;box-sizing:border-box;border-radius:1px"></div>
<svg style="position:absolute;left:1407.0px;top:592.3px" width="12" height="3" viewBox="0 0 12 3"><rect x="1.6" y="0.7" width="1.7" height="1.7" fill="#3a3a3a"/><rect x="5.15" y="0.7" width="1.7" height="1.7" fill="#3a3a3a"/><rect x="8.7" y="0.7" width="1.7" height="1.7" fill="#3a3a3a"/></svg>
<div class="t" style="left:1195.3px;top:606.86px;font-size:16px;line-height:16px;color:#2a9a2a;font-weight:bold;font-style:italic;letter-spacing:0.17px;">(XML content)</div>
<div style="left:1399.3px;top:603.6px;width:27.4px;height:26.8px;background:#efefef;border:1.5px solid #8a8a8a;box-sizing:border-box;border-radius:1px"></div>
<svg style="position:absolute;left:1407.0px;top:621.9px" width="12" height="3" viewBox="0 0 12 3"><rect x="1.6" y="0.7" width="1.7" height="1.7" fill="#3a3a3a"/><rect x="5.15" y="0.7" width="1.7" height="1.7" fill="#3a3a3a"/><rect x="8.7" y="0.7" width="1.7" height="1.7" fill="#3a3a3a"/></svg>
<div class="t" style="left:1199.5px;top:639.96px;font-size:16px;line-height:16px;color:#1a1a1a;font-weight:normal;font-style:normal;letter-spacing:0.17px;">Settings</div>
<div style="left:1195.4px;top:663.7px;width:204px;height:27.4px;background:#fff;border:1.5px solid #b4b4b4;box-sizing:border-box;border-right:none"></div>
<div style="left:1197px;top:664px;width:200.5px;height:26px;overflow:hidden">
<div class="t" style="left:2.5px;top:6.46px;font-size:16px;line-height:16px;color:#1a1a1a;font-weight:normal;font-style:normal;letter-spacing:0px;">%MYDOCUMENTS%\WorkflowSample.pdf</div>
</div>
<div style="left:1399.3px;top:663.7px;width:27.4px;height:27.4px;background:#efefef;border:1.5px solid #8a8a8a;box-sizing:border-box;border-radius:1px"></div>
<svg style="position:absolute;left:1407.0px;top:682.6px" width="12" height="3" viewBox="0 0 12 3"><rect x="1.6" y="0.7" width="1.7" height="1.7" fill="#3a3a3a"/><rect x="5.15" y="0.7" width="1.7" height="1.7" fill="#3a3a3a"/><rect x="8.7" y="0.7" width="1.7" height="1.7" fill="#3a3a3a"/></svg>
<div style="left:1195.4px;top:693px;width:231.3px;height:30.4px;background:#fff;border:1.5px solid #b4b4b4;box-sizing:border-box;border-radius:1px"></div>
<div style="left:1197px;top:694px;width:200.5px;height:28px;overflow:hidden">
<div class="t" style="left:5.6px;top:7.38px;font-size:15.5px;line-height:15.5px;color:#1a1a1a;font-weight:normal;font-style:normal;letter-spacing:-0.55px;">CWFF_LOADIMG, CWFF_RECOGNIZE, CWFF_EXPORTDOC</div>
</div>
<svg style="position:absolute;left:1408.0px;top:704.25px" width="11" height="6.5" viewBox="0 0 11 6.5"><path d="M1 1 L5.5 5.5 L10 1" fill="none" stroke="#333" stroke-width="1.7"/></svg>
<div class="t" style="left:1199.5px;top:732.56px;font-size:16px;line-height:16px;color:#1a1a1a;font-weight:normal;font-style:normal;letter-spacing:-0.134px;">Parameters</div>
<div class="t" style="left:1198.9px;top:791.26px;font-size:16px;line-height:16px;color:#1a1a1a;font-weight:normal;font-style:normal;letter-spacing:0.573px;">Converts input jpg to pdf</div>
<svg style="position:absolute;left:1200.8px;top:848.9px" width="21" height="20" viewBox="0 0 21 20"><rect x="1.2" y="1.1" width="18.6" height="18.2" rx="1.3" fill="#fff" stroke="#9c9c9c" stroke-width="1.5"/><path d="M5.4 10.6 L10 15 L16.2 5" fill="none" stroke="#151515" stroke-width="2.6" stroke-linecap="round" stroke-linejoin="round"/></svg>
<div class="t" style="left:1195px;top:878.66px;font-size:16px;line-height:16px;color:#7c7c7c;font-weight:normal;font-style:italic;letter-spacing:0px;">(none)</div>
<div style="left:1399px;top:874.9px;width:27.5px;height:27.1px;background:#efefef;border:1.5px solid #8a8a8a;box-sizing:border-box;border-radius:1px"></div>
<svg style="position:absolute;left:1406.75px;top:893.5px" width="12" height="3" viewBox="0 0 12 3"><rect x="1.6" y="0.7" width="1.7" height="1.7" fill="#3a3a3a"/><rect x="5.15" y="0.7" width="1.7" height="1.7" fill="#3a3a3a"/><rect x="8.7" y="0.7" width="1.7" height="1.7" fill="#3a3a3a"/></svg>
<div style="left:1195px;top:904.1px;width:204.2px;height:27.6px;background:#fff;border:1.5px solid #b4b4b4;box-sizing:border-box;border-right:none"></div>
<div style="left:1399px;top:904.1px;width:27.5px;height:27.1px;background:#efefef;border:1.5px solid #8a8a8a;box-sizing:border-box;border-radius:1px"></div>
<svg style="position:absolute;left:1406.75px;top:922.7px" width="12" height="3" viewBox="0 0 12 3"><rect x="1.6" y="0.7" width="1.7" height="1.7" fill="#3a3a3a"/><rect x="5.15" y="0.7" width="1.7" height="1.7" fill="#3a3a3a"/><rect x="8.7" y="0.7" width="1.7" height="1.7" fill="#3a3a3a"/></svg>
<div class="t" style="left:1195.3px;top:937.16px;font-size:16px;line-height:16px;color:#7c7c7c;font-weight:normal;font-style:italic;letter-spacing:0.053px;">(Collection)</div>
<div style="left:1399px;top:933.9px;width:27.5px;height:27.4px;background:#efefef;border:1.5px solid #8a8a8a;box-sizing:border-box;border-radius:1px"></div>
<svg style="position:absolute;left:1406.75px;top:952.8px" width="12" height="3" viewBox="0 0 12 3"><rect x="1.6" y="0.7" width="1.7" height="1.7" fill="#3a3a3a"/><rect x="5.15" y="0.7" width="1.7" height="1.7" fill="#3a3a3a"/><rect x="8.7" y="0.7" width="1.7" height="1.7" fill="#3a3a3a"/></svg>
<div class="t" style="left:1199.5px;top:970.76px;font-size:16px;line-height:16px;color:#1a1a1a;font-weight:normal;font-style:normal;letter-spacing:-1.179px;">(REC_OK)</div>
</body></html>
